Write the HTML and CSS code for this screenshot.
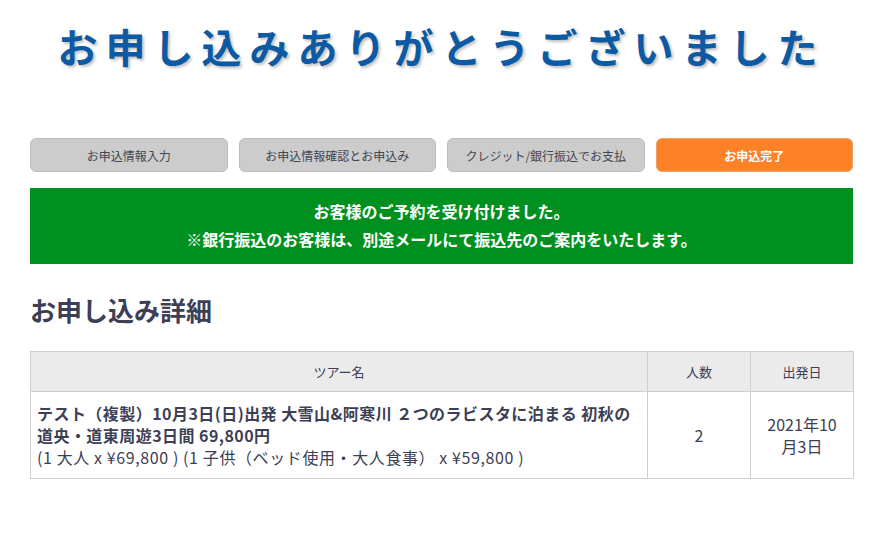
FILE: index.html
```html
<!DOCTYPE html>
<html lang="ja">
<head>
<meta charset="utf-8">
<link rel="stylesheet" href="styles.css">
</head>
<body>
<div class="page">
  <h1 class="title">お申し込みありがとうございました</h1>
  <ol class="steps">
    <li class="step">お申込情報入力</li>
    <li class="step">お申込情報確認とお申込み</li>
    <li class="step">クレジット/銀行振込でお支払</li>
    <li class="step step-active">お申込完了</li>
  </ol>
  <div class="notice">
    <p>お客様のご予約を受け付けました。</p>
    <p>※銀行振込のお客様は、別途メールにて振込先のご案内をいたします。</p>
  </div>
  <h2 class="section-title">お申し込み詳細</h2>
  <table class="detail">
    <thead>
      <tr>
        <th class="col-name">ツアー名</th>
        <th class="col-num">人数</th>
        <th class="col-date">出発日</th>
      </tr>
    </thead>
    <tbody>
      <tr>
        <td class="cell-name"><strong>テスト（複製）10月3日(日)出発 大雪山&amp;阿寒川 ２つのラビスタに泊まる 初秋の道央・道東周遊3日間 69,800円</strong><br><span class="pax">(1 大人 x ¥69,800 ) (1 子供（ベッド使用・大人食事） x ¥59,800 )</span></td>
        <td class="cell-center">2</td>
        <td class="cell-center">2021年10月3日</td>
      </tr>
    </tbody>
  </table>
</div>
</body>
</html>
```
FILE: styles.css
```css
* { box-sizing: border-box; }
html, body { margin: 0; padding: 0; background: #fff; }
body {
  font-family: "Noto Sans CJK JP", "Noto Sans", sans-serif;
  color: #3d3f55;
}
.page {
  width: 823px;
  margin-left: 30px;
  padding-top: 20px;
}
.title {
  margin: 0;
  text-align: center;
  font-size: 40px;
  line-height: 52px;
  font-weight: 700;
  letter-spacing: 8px;
  color: #0b5aa3;
  text-shadow: 2px 2px 3px rgba(0,0,0,0.25);
}
.steps {
  list-style: none;
  margin: 66px 0 0;
  padding: 0;
  display: grid;
  grid-template-columns: repeat(4, 1fr);
  gap: 11px;
}
.step {
  height: 34px;
  display: flex;
  align-items: center;
  justify-content: center;
  background: #cccccc;
  border: 1px solid #bdbdbd;
  border-radius: 6px;
  font-size: 12px;
  color: #444654;
}
.step-active {
  background: #fd8126;
  border-color: #e9a36a;
  color: #fff;
  font-weight: 700;
}
.notice {
  margin-top: 16px;
  background: #009020;
  color: #fff;
  text-align: center;
  font-weight: 700;
  font-size: 16px;
  line-height: 28px;
  padding: 9px 0 11px;
}
.notice p { margin: 0; }
.section-title {
  margin: 28px 0 0;
  font-size: 26px;
  line-height: 36px;
  font-weight: 700;
  color: #3d3f55;
}
.detail {
  margin-top: 23px;
  width: 823px;
  border-collapse: collapse;
  table-layout: fixed;
  font-size: 16px;
}
.detail th, .detail td {
  border: 1px solid #cfcfcf;
}
.detail th {
  background: #ebebeb;
  font-weight: 400;
  font-size: 13px;
  height: 40px;
  color: #3d3f55;
}
.col-name { width: 617px; }
.col-num { width: 103px; }
.col-date { width: 103px; }
.detail td {
  padding: 10px 10px;
  line-height: 22px;
  vertical-align: middle;
  font-size: 16px;
}
.detail td.cell-name { padding: 10px 6px; }
.cell-name strong { letter-spacing: 0.45px; }
.pax { letter-spacing: 0.6px; }
.cell-center { text-align: center; }
```
